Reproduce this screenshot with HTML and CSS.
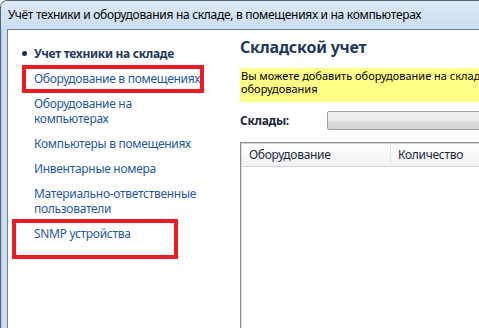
FILE: index.html
```html
<!DOCTYPE html>
<html lang="ru">
<head>
  <meta charset="UTF-8" />
  <title>Учёт техники и оборудования</title>
  <link rel="stylesheet" href="styles.css">
</head>
<body>
  <div class="window">
    <div class="titlebar">Учёт техники и оборудования на складе, в помещениях и на компьютерах</div>

    <div class="client">
      <nav class="tasks">
        <div class="task-head">Учет техники на складе</div>
        <a class="task">Оборудование в помещениях</a>
        <a class="task">Оборудование на<br>компьютерах</a>
        <a class="task">Компьютеры в помещениях</a>
        <a class="task">Инвентарные номера</a>
        <a class="task">Материально-ответственные<br>пользователи</a>
        <a class="task">SNMP устройства</a>
      </nav>

      <main class="panel">
        <h1>Складской учет</h1>
        <div class="notice">Вы можете добавить оборудование на склад и указать количество<br>оборудования</div>

        <div class="field">
          <label class="field-label">Склады:</label>
          <div class="combo"></div>
        </div>

        <div class="grid">
          <div class="grid-head">
            <div class="col col-name">Оборудование</div>
            <div class="col col-qty">Количество</div>
          </div>
        </div>
      </main>

      <!-- red annotation frames drawn over the screenshot -->
      <div class="mark mark-one"></div>
      <div class="mark mark-two"></div>
    </div>
  </div>
</body>
</html>
```

FILE: styles.css
```css
html, body { margin: 0; height: 100%; overflow: hidden; }
body { font-family: "Noto Sans", "Liberation Sans", sans-serif; font-size: 12px; letter-spacing: -0.3px; background: #fff; }

.window { width: 640px; height: 100%; display: flex; flex-direction: column; box-sizing: border-box;
  border-left: 1px solid #54657a; border-top: 1px solid #54657a; border-top-left-radius: 7px;
  background: linear-gradient(to right, #b7cfe9, #d3e2f2 4px, #c4d8ee 6px); }
.titlebar { height: 28px; line-height: 28px; padding-left: 7px; color: #000; white-space: nowrap;
  background: linear-gradient(to bottom, #dde9f6, #cbddf1); border-top-left-radius: 6px; }

.client { position: relative; flex: 1; display: flex; margin-left: 6px; background: #fff;
  border-left: 1px solid #6f8195; border-top: 1px solid #6f8195; }

.tasks { width: 232px; flex: none; display: flex; flex-direction: column; gap: 10px;
  padding: 16px 0 0 26px; box-sizing: border-box; line-height: 15px; }
.task-head { position: relative; font-weight: bold; color: #1e395b; }
.task-head::before { content: ""; position: absolute; left: -12px; top: 5px; width: 5px; height: 5px;
  border-radius: 50%; background: #1e2f55; }
.task { color: #1f57a4; text-decoration: none; cursor: pointer; }

.panel { flex: 1; padding-top: 8px; }
h1 { margin: 0; font-size: 16px; line-height: 19px; letter-spacing: -0.2px; color: #1e395b; }
.notice { margin-top: 11px; padding: 1px 0 7px 1px; background: #fefe86; font-size: 11px; line-height: 13px;
  letter-spacing: 0; color: #000; white-space: nowrap; }

.field { display: flex; align-items: center; margin-top: 9px; }
.field-label { width: 87px; font-weight: bold; color: #1b2a3a; }
.combo { flex: 1; height: 17px; border: 1px solid #a3a3a3; border-radius: 2px;
  background: linear-gradient(to bottom, #f3f3f3 0, #ebebeb 50%, #dddddd 51%, #d4d4d4 100%); }

.grid { margin-top: 12px; height: 300px; border: 1px solid #8f9090; box-shadow: inset 1px 1px 0 #d4d4d4; }
.grid-head { display: flex; height: 22px; margin: 1px 0 0 1px; border-bottom: 1px solid #d6d6d6;
  background: linear-gradient(to bottom, #ffffff, #f1f2f4); }
.col { padding-left: 7px; line-height: 22px; color: #1b2a3a; box-sizing: border-box; }
.col-name { width: 149px; border-right: 1px solid #e2e3e5; }

.mark { position: absolute; border: 4px solid #ed1c24; box-sizing: border-box; }
.mark-one { left: 14px; top: 35px; width: 182px; height: 28px; }
.mark-two { left: 4px; top: 189px; width: 166px; height: 40px; }
```
